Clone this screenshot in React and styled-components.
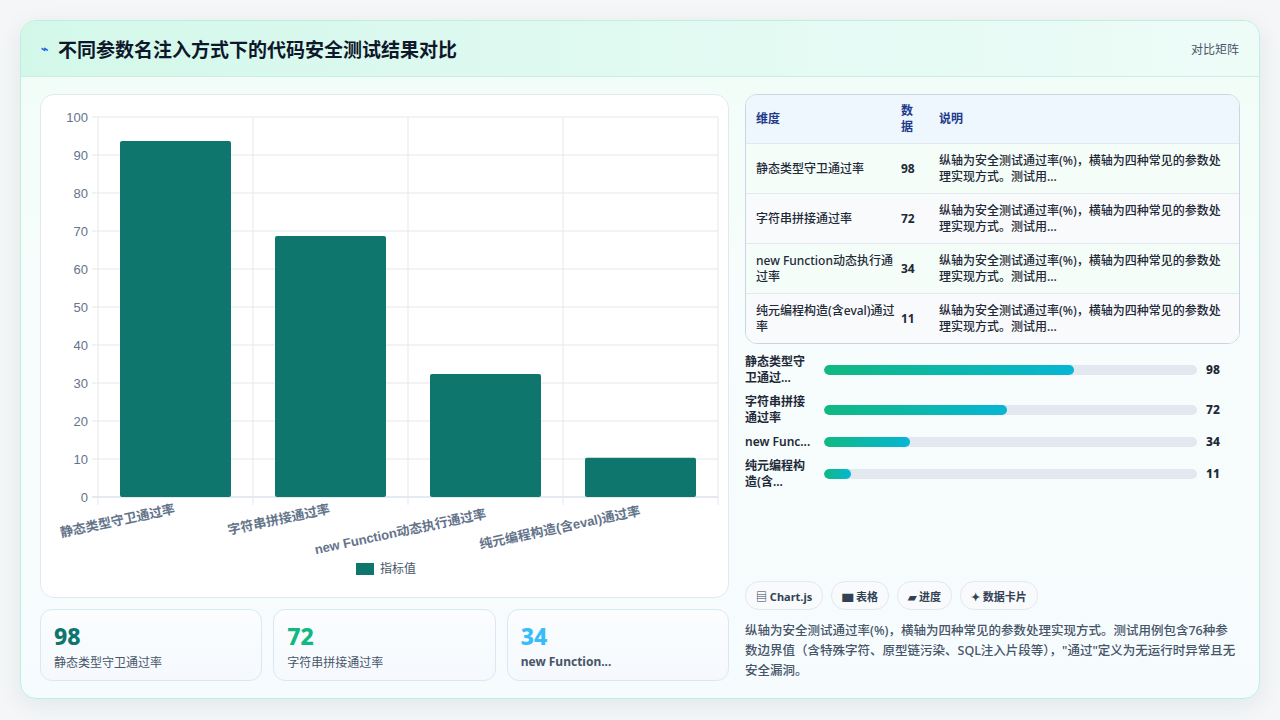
import styled, { createGlobalStyle } from "styled-components";

const Global = createGlobalStyle`
  body {
    margin: 0;
    background: #f4f6f8;
    font-family: "Noto Sans", "Noto Sans CJK SC", sans-serif;
  }
`;

const Page = styled.div`
  width: 1280px;
  height: 720px;
  padding: 20px;
  box-sizing: border-box;
`;

const Card = styled.div`
  width: 1240px;
  height: 679px;
  border-radius: 16px;
  border: 1px solid #bfeedd;
  background: linear-gradient(180deg, #f0fdf7 0%, #f7fdfc 40%, #f6fbfd 100%);
  box-shadow: 0 6px 24px rgba(15, 60, 50, 0.08);
  overflow: hidden;
  display: flex;
  flex-direction: column;
  box-sizing: border-box;
`;

const Header = styled.div`
  height: 55px;
  flex-shrink: 0;
  display: flex;
  align-items: center;
  justify-content: space-between;
  padding: 0 20px 0 20px;
  background: linear-gradient(90deg, #d3f8ea 0%, #e3faf3 60%, #eefcf8 100%);
  border-bottom: 1px solid #cdeee2;
`;

const Title = styled.h1`
  margin: 0;
  display: flex;
  align-items: center;
  gap: 10px;
  font-size: 19px;
  font-weight: 700;
  color: #0f172a;
`;

const Spark = styled.span`
  color: #2563eb;
  font-size: 12px;
`;

const HeaderTag = styled.span`
  font-size: 12px;
  color: #475569;
`;

const Body = styled.div`
  flex: 1;
  display: grid;
  grid-template-columns: 689px 495px;
  gap: 16px;
  padding: 17px 19px 17px 19px;
  min-height: 0;
`;

const Column = styled.div`
  display: flex;
  flex-direction: column;
  min-height: 0;
`;

const ChartCard = styled.div`
  height: 503px;
  background: #fff;
  border: 1px solid #e2e8f0;
  border-radius: 14px;
  overflow: hidden;
`;

const StatRow = styled.div`
  margin-top: 11px;
  display: grid;
  grid-template-columns: repeat(3, 1fr);
  gap: 11px;
`;

const Stat = styled.div`
  height: 72px;
  box-sizing: border-box;
  border: 1px solid #dbe7f3;
  border-radius: 12px;
  background: linear-gradient(180deg, #fbfdff, #f5f9fd);
  padding: 12px 13px;
`;

const StatValue = styled.div`
  font-size: 23px;
  font-weight: 800;
  line-height: 28px;
  color: ${(p) => p.$color};
`;

const StatLabel = styled.div`
  font-size: 12px;
  margin-top: 3px;
  color: #475569;
  font-weight: ${(p) => (p.$bold ? 700 : 400)};
`;

const Table = styled.div`
  border: 1px solid #cbd5e1;
  border-radius: 12px;
  overflow: hidden;
  background: #fff;
`;

const Row = styled.div`
  display: grid;
  grid-template-columns: 145px 38px 1fr;
  align-items: center;
  height: ${(p) => (p.$head ? 48 : 49)}px;
  padding: 0 10px;
  font-size: 12px;
  color: ${(p) => (p.$head ? "#1e3a8a" : "#1f2937")};
  font-weight: ${(p) => (p.$head ? 700 : 500)};
  background: ${(p) => (p.$head ? "#eef6fe" : p.$alt ? "#f8fafc" : "#f5fdf9")};
  border-top: ${(p) => (p.$head ? "none" : "1px solid #e2e8f0")};
  line-height: 16px;
`;

const Num = styled.span`
  font-weight: 700;
`;

const Bars = styled.div`
  margin-top: 10px;
  display: flex;
  flex-direction: column;
  gap: 8px;
`;

const BarRow = styled.div`
  display: grid;
  grid-template-columns: 79px 373px 1fr;
  align-items: center;
  column-gap: 0;
  font-size: 12px;
  line-height: 16px;
  color: #1f2937;
  font-weight: 600;
`;

const BarLabel = styled.div`
  padding-right: 8px;
`;

const Track = styled.div`
  height: 10px;
  border-radius: 5px;
  background: #e2e8f0;
  overflow: hidden;
`;

const Fill = styled.div`
  height: 100%;
  border-radius: 5px;
  background: linear-gradient(90deg, #10b981, #06b6d4);
`;

const BarValue = styled.div`
  padding-left: 9px;
  font-weight: 800;
`;

const Chips = styled.div`
  margin-top: auto;
  display: flex;
  gap: 8px;
`;

const Chip = styled.span`
  height: 27px;
  padding: 0 10px;
  display: inline-flex;
  align-items: center;
  border: 1px solid #e2e8f0;
  border-radius: 14px;
  background: #f8fafc;
  font-size: 11px;
  font-weight: 700;
  color: #334155;
`;

const Note = styled.p`
  margin: 11px 0 0;
  font-size: 12.5px;
  line-height: 20px;
  color: #475569;
  font-weight: 500;
`;

const rows = [
  ["静态类型守卫通过率", 98],
  ["字符串拼接通过率", 72],
  ["new Function动态执行通过率", 34],
  ["纯元编程构造(含eval)通过率", 11],
];

const desc = "纵轴为安全测试通过率(%)，横轴为四种常见的参数处理实现方式。测试用...";

const bars = [
  ["静态类型守卫通过...", 98, 67],
  ["字符串拼接通过率", 72, 49],
  ["new Func...", 34, 23],
  ["纯元编程构造(含...", 11, 7.3],
];

const chartVals = [93.7, 68.7, 32.4, 10.3];

function Chart() {
  const x0 = 57, x1 = 677, y0 = 402, yTop = 22;
  const step = (x1 - x0) / 4;
  const ux = (y0 - yTop) / 100;
  const ticks = [0, 10, 20, 30, 40, 50, 60, 70, 80, 90, 100];
  const labelEnds = [135, 290, 445, 600];
  return (
    <svg width="689" height="503" style={{ display: "block" }} fontFamily="'Liberation Sans','Noto Sans CJK SC',sans-serif">
      {ticks.map((t) => {
        const y = y0 - t * ux;
        return (
          <g key={t}>
            <line x1={x0 - 6} x2={x1} y1={y} y2={y} stroke={t === 0 ? "#cbd5e1" : "#e5e7eb"} />
            <text x={x0 - 10} y={y + 5} textAnchor="end" fontSize="13" fill="#64748b">{t}</text>
          </g>
        );
      })}
      {[0, 1, 2, 3, 4].map((i) => (
        <line key={i} x1={x0 + i * step} x2={x0 + i * step} y1={yTop} y2={y0 + 8} stroke="#e5e7eb" />
      ))}
      {chartVals.map((v, i) => (
        <rect key={i} x={x0 + i * step + 22} y={y0 - v * ux} width={111} height={v * ux} rx="2" fill="#0f766e" />
      ))}
      {rows.map(([l], i) => (
        <text key={l} x={labelEnds[i]} y={i === 2 ? 423 : i === 3 ? 420 : 418} textAnchor="end" fontSize="13" fontWeight="600" fill="#64748b"
          transform={`rotate(-12 ${labelEnds[i]} 420)`}>{l}</text>
      ))}
      <rect x="315" y="468" width="18" height="12" fill="#0f766e" />
      <text x="339" y="478" fontSize="12" fill="#475569">指标值</text>
    </svg>
  );
}

export default function App() {
  return (
    <Page>
      <Global />
      <Card>
        <Header>
          <Title><Spark>⌁</Spark>不同参数名注入方式下的代码安全测试结果对比</Title>
          <HeaderTag>对比矩阵</HeaderTag>
        </Header>
        <Body>
          <Column>
            <ChartCard><Chart /></ChartCard>
            <StatRow>
              <Stat><StatValue $color="#0f766e">98</StatValue><StatLabel>静态类型守卫通过率</StatLabel></Stat>
              <Stat><StatValue $color="#10b981">72</StatValue><StatLabel>字符串拼接通过率</StatLabel></Stat>
              <Stat><StatValue $color="#38bdf8">34</StatValue><StatLabel $bold>new Function...</StatLabel></Stat>
            </StatRow>
          </Column>
          <Column>
            <Table>
              <Row $head><span>维度</span><span>数<br />据</span><span>说明</span></Row>
              {rows.map(([l, v], i) => (
                <Row key={l} $alt={i % 2 === 1}><span>{l}</span><Num>{v}</Num><span>{desc}</span></Row>
              ))}
            </Table>
            <Bars>
              {bars.map(([l, v, w]) => (
                <BarRow key={l}>
                  <BarLabel>{l}</BarLabel>
                  <Track><Fill style={{ width: `${w}%` }} /></Track>
                  <BarValue>{v}</BarValue>
                </BarRow>
              ))}
            </Bars>
            <Chips>
              <Chip>▤ Chart.js</Chip>
              <Chip>▆ 表格</Chip>
              <Chip>▰ 进度</Chip>
              <Chip>✦ 数据卡片</Chip>
            </Chips>
            <Note>纵轴为安全测试通过率(%)，横轴为四种常见的参数处理实现方式。测试用例包含76种参数边界值（含特殊字符、原型链污染、SQL注入片段等），"通过"定义为无运行时异常且无安全漏洞。</Note>
          </Column>
        </Body>
      </Card>
    </Page>
  );
}
